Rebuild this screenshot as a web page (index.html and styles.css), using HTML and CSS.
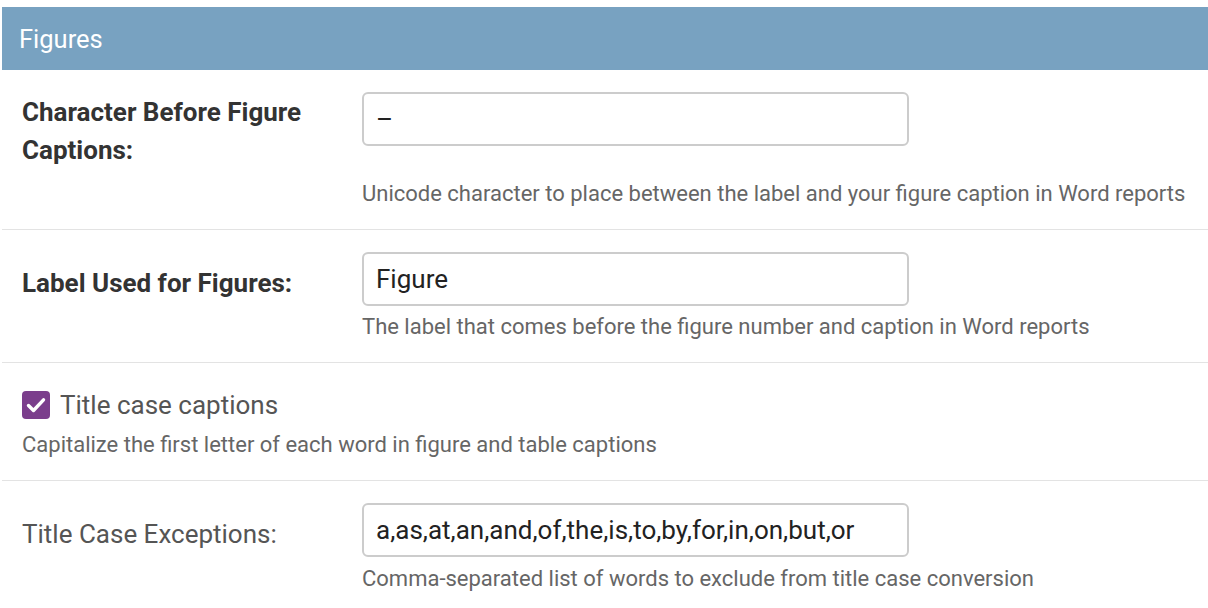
FILE: index.html
```html
<!DOCTYPE html>
<html>
<head>
<meta charset="utf-8">
<link rel="stylesheet" href="styles.css">
</head>
<body>
<fieldset class="module">
  <h2 class="caption">Figures</h2>
  <div class="form-row">
    <div class="field">
      <label class="label required label-top">Character Before Figure Captions:</label>
      <input class="text-input" type="text" value="–">
    </div>
    <div class="help help-after-label">Unicode character to place between the label and your figure caption in Word reports</div>
  </div>
  <div class="form-row">
    <div class="field">
      <label class="label required">Label Used for Figures:</label>
      <input class="text-input" type="text" value="Figure">
    </div>
    <div class="help">The label that comes before the figure number and caption in Word reports</div>
  </div>
  <div class="form-row">
    <div class="check-line">
      <span class="checkbox"><svg viewBox="0 0 28 28" width="28" height="28"><path d="M6.5 14.5 L11.5 19.5 L21.5 8.8" fill="none" stroke="#fff" stroke-width="3.4" stroke-linecap="round" stroke-linejoin="round"/></svg></span>
      <span class="check-label">Title case captions</span>
    </div>
    <div class="help help-flush">Capitalize the first letter of each word in figure and table captions</div>
  </div>
  <div class="form-row last">
    <div class="field">
      <label class="label">Title Case Exceptions:</label>
      <input class="text-input" type="text" value="a,as,at,an,and,of,the,is,to,by,for,in,on,but,or">
    </div>
    <div class="help help-last">Comma-separated list of words to exclude from title case conversion</div>
  </div>
</fieldset>
</body>
</html>
```
FILE: styles.css
```css
html, body {
  margin: 0;
  padding: 0;
  background: #fff;
}
body {
  font-family: Roboto, "Liberation Sans", sans-serif;
  color: #333;
}
.module {
  margin: 7px 0 0 2px;
  padding: 0;
  border: none;
  min-width: 0;
}
.caption {
  margin: 0;
  height: 63px;
  display: flex;
  align-items: center;
  padding: 0 0 0 17px;
  background: #78a2c1;
  color: #fff;
  font-size: 25.5px;
  font-weight: 400;
}
.form-row {
  padding: 22px 0 22px 20px;
  border-bottom: 1px solid #e3e3e3;
}
.form-row.last {
  border-bottom: none;
}
.field {
  display: flex;
  align-items: flex-start;
}
.label {
  width: 340px;
  flex: none;
  font-size: 26px;
  line-height: 38px;
  padding-top: 12px;
  color: #555;
  box-sizing: border-box;
  padding-right: 20px;
}
.label.required {
  font-weight: 700;
  color: #333;
}
.label.label-top {
  padding-top: 1px;
}
.text-input {
  width: 547px;
  height: 54px;
  box-sizing: border-box;
  border: 2px solid #cccccc;
  border-radius: 6px;
  padding: 0 12px;
  font-family: Roboto, "Liberation Sans", sans-serif;
  font-size: 26px;
  color: #222;
  background: #fff;
  margin: 0;
}
.help {
  margin: 8px 0 0 340px;
  font-size: 22px;
  line-height: 26px;
  color: #666;
}
.help.help-after-label {
  margin-top: 12px;
}
.help.help-flush {
  margin: 7px 0 0 0;
}
.help.help-last {
  margin-top: 9px;
}
.check-line {
  display: flex;
  align-items: center;
  height: 40px;
}
.checkbox {
  width: 28px;
  height: 28px;
  border-radius: 4px;
  background: #7b3e8c;
  display: flex;
  flex: none;
  margin-right: 10px;
}
.check-label {
  font-size: 26px;
  color: #555;
}
```
